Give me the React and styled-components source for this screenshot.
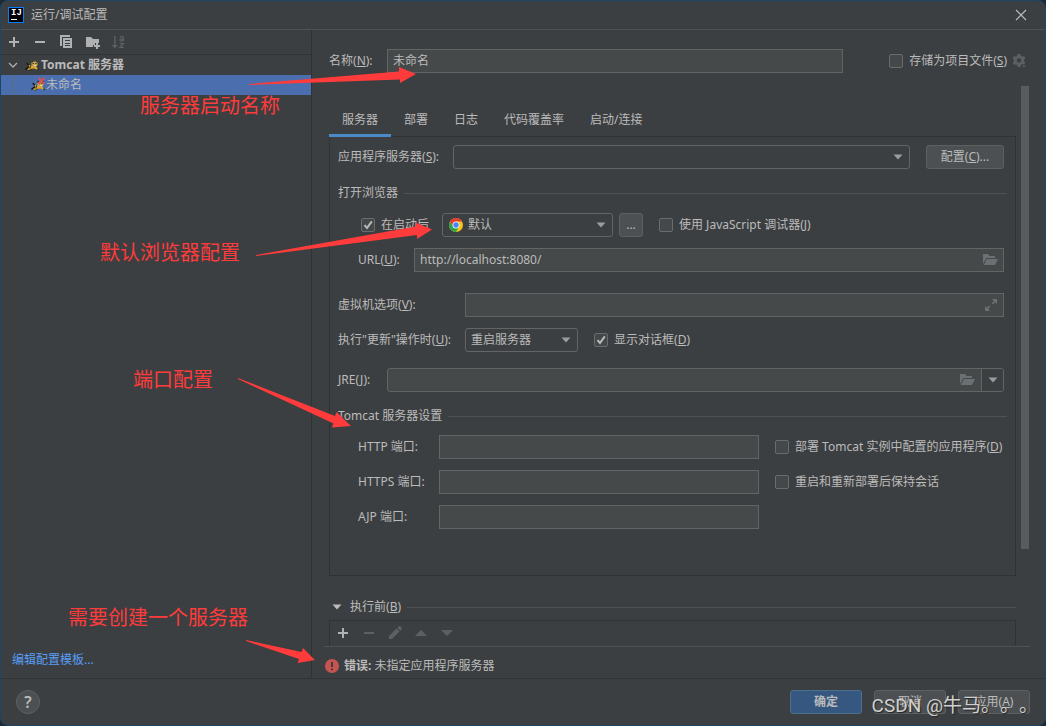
import { useState } from "react";
import styled, { createGlobalStyle } from "styled-components";

const GlobalStyle = createGlobalStyle`
  * {
    box-sizing: border-box;
  }
  body {
    margin: 0;
    background-color: #1d2a36;
    color: #bbbbbb;
    font-family: "Noto Sans", "Noto Sans CJK SC", sans-serif;
    font-size: 12px;
    line-height: 16px;
  }
  button,
  input,
  select {
    font: inherit;
    color: inherit;
  }
`;

// "名称(N):" -> underlined mnemonic letter
const Mnemonic = ({ text, letter, end = "" }) => (
  <span>
    {text}(<u>{letter}</u>){end}
  </span>
);

const TriangleIcon = () => (
  <svg width="10" height="6" viewBox="0 0 10 6">
    <path d="M0.5 0.5H9.5L5 5.5Z" fill="currentColor" />
  </svg>
);

const PlusIcon = () => (
  <svg width="16" height="16" viewBox="0 0 16 16" fill="currentColor">
    <path d="M7 3H9V7H13V9H9V13H7V9H3V7H7Z" />
  </svg>
);

const MinusIcon = () => (
  <svg width="16" height="16" viewBox="0 0 16 16" fill="currentColor">
    <path d="M3 7H13V9H3Z" />
  </svg>
);

const CopyIcon = () => (
  <svg width="16" height="16" viewBox="0 0 16 16" fill="currentColor">
    <path d="M2 1H12V3H4V12H2Z" />
    <path fillRule="evenodd" d="M5 4H14V14H5ZM7 6V7H12V6ZM7 9V10H12V9ZM7 11V12H12V11Z" />
  </svg>
);

const FolderAddIcon = () => (
  <svg width="16" height="16" viewBox="0 0 16 16" fill="currentColor">
    <path d="M2 3H7L9 5H15V9H11V11H9V13H2Z" />
    <path d="M12 9H14V11H16V13H14V15H12V13H10V11H12Z" />
  </svg>
);

const SortIcon = () => (
  <svg width="16" height="16" viewBox="0 0 16 16" fill="currentColor">
    <path d="M4 2H5.5V11H8L4.8 14.2L1.5 11H4Z" />
    <path
      d="M10 3.2C11 2.2 13.5 2.2 13.5 4V7M13.5 5C11 4.6 9.7 5.2 9.8 6.2C10 7.5 13 7.3 13.5 5.5M10 9.7H13.3L10 13.3H13.7"
      fill="none"
      stroke="currentColor"
      strokeWidth="1.3"
    />
  </svg>
);

const PencilIcon = () => (
  <svg width="16" height="16" viewBox="0 0 16 16" fill="currentColor">
    <path d="M2 11L9.5 3.5L12.5 6.5L5 14H2Z" />
    <path d="M10.3 2.7L11.7 1.4C12.2 0.9 12.8 0.9 13.3 1.4L14.6 2.7C15.1 3.2 15.1 3.8 14.6 4.3L13.3 5.7Z" />
  </svg>
);

const FolderIcon = () => (
  <svg width="16" height="16" viewBox="0 0 16 16" fill="currentColor">
    <path d="M1 2H6L7.5 4H13V6H4.5L1 12Z" />
    <path d="M5 7H16L13 13H1.7Z" />
  </svg>
);

const ExpandIcon = () => (
  <svg width="14" height="14" viewBox="0 0 14 14" fill="currentColor">
    <path d="M8 1H13V6L11.2 4.2L8.8 6.6L7.6 5.4L9.9 3Z" />
    <path d="M1 8L2.8 9.8L5.2 7.4L6.4 8.6L4.1 11L6 13H1Z" />
  </svg>
);

const GearIcon = () => (
  <svg width="16" height="16" viewBox="0 0 16 16">
    <g fill="currentColor">
      <path
        fillRule="evenodd"
        d="M5.6 1H8.4L8.8 2.9L10.2 3.7L12 3L13.4 5.4L12 6.7V8.3L13.4 9.6L12 12L10.2 11.3L8.8 12.1L8.4 14H5.6L5.2 12.1L3.8 11.3L2 12L0.6 9.6L2 8.3V6.7L0.6 5.4L2 3L3.8 3.7L5.2 2.9ZM7 5.2A2.3 2.3 0 1 0 7 9.8A2.3 2.3 0 1 0 7 5.2Z"
      />
      <path d="M9 12H15L12 15Z" stroke="#3c3f41" strokeWidth="1" />
    </g>
  </svg>
);

const ChromeIcon = () => (
  <svg width="14" height="14" viewBox="0 0 16 16">
    <circle cx="8" cy="8" r="8" fill="#fbc116" />
    <path d="M8 4H14.93A8 8 0 0 0 1.07 4L4.5 10Z" fill="#e33b2e" />
    <path d="M1.07 4A8 8 0 0 0 8 16L11.4 10L8 8L4.5 10Z" fill="#2ba24c" />
    <circle cx="8" cy="8" r="4" fill="#ffffff" />
    <circle cx="8" cy="8" r="3.1" fill="#4285f4" />
  </svg>
);

const TomcatIcon = ({ broken }) => (
  <svg width="16" height="16" viewBox="0 0 16 16">
    <path
      d="M5 8.5C4 7.5 3.6 6.4 2.6 6.2M5 9.5L1.4 12.6M8 11L4.6 13M12 10.6L14.4 13"
      fill="none"
      stroke="#191813"
      strokeWidth="1.5"
    />
    <path d="M4.4 8L8 8.4L12.6 9.4L14 12.4H12L10.6 11.4L7.6 11.8L5.6 12.8L3 12.8L5.4 10.6Z" fill="#dba72c" />
    <path d="M7.4 3.6L9.2 4.6H11.4L13.6 3.6V8L11.6 9.8L9 9.2L7.4 7.4Z" fill="#c8a452" />
    <path d="M7.2 3.2L9.4 4.6L7.6 6.2ZM13.8 3.2L11.8 4.6L13.6 6Z" fill="#2b2415" />
    <path d="M8.6 6H9.8V7H8.6ZM11.4 6H12.6V7H11.4ZM6 8.4L7 8.6L6.4 11.4L5.4 11.6Z" fill="#23251d" />
    <path d="M10 8L12.4 8L11.4 9.4Z" fill="#f2e6c4" />
    {broken && (
      <path d="M8.5 1L14.5 7M14.5 1L8.5 7" stroke="#d8505c" strokeWidth="1.8" />
    )}
  </svg>
);

const IdeaIcon = () => (
  <Logo>
    IJ
    <i />
  </Logo>
);

const ErrorIcon = () => (
  <svg width="14" height="14" viewBox="0 0 14 14">
    <circle cx="7" cy="7" r="7" fill="#c75450" />
    <path d="M6 3H8V8H6ZM6 9.4H8V11.2H6Z" fill="#3c3f41" />
  </svg>
);

const Check = ({ id, defaultChecked, children }) => (
  <CheckLabel htmlFor={id}>
    <CheckBox type="checkbox" id={id} defaultChecked={defaultChecked} />
    <svg width="14" height="14" viewBox="0 0 14 14">
      <path d="M3.5 7.2L6 10L10.8 3.4" fill="none" stroke="#bbbbbb" strokeWidth="2" />
    </svg>
    {children}
  </CheckLabel>
);

const Dropdown = ({ id, label, options, icon, width }) => (
  <SelectBox $width={width}>
    {icon}
    <select id={id} aria-label={label}>
      {options.map((option) => (
        <option key={option}>{option}</option>
      ))}
    </select>
    <TriangleIcon />
  </SelectBox>
);

const tabs = ["服务器", "部署", "日志", "代码覆盖率", "启动/连接"];

const notes = [
  { text: "服务器启动名称", x: 140, y: 94 },
  { text: "默认浏览器配置", x: 100, y: 241 },
  { text: "端口配置", x: 133, y: 368 },
  { text: "需要创建一个服务器", x: 68, y: 606 },
];

const arrows = [
  "249,84 399,71.5 399,67 416,74 400,83 400,79.5 249,85",
  "256,255 415.5,226.5 415.5,222.5 432,229.5 417,239 417,235 256,256",
  "238,378 335,416 336.5,412 351,426 332,427.5 333.5,423.5 238,379",
  "246,640 301.5,652 303,648 315,660 297.5,663 299,659 246,641",
];

const App = () => {
  const [active, setActive] = useState(tabs[0]);

  return (
    <Window>
      <GlobalStyle />
      <TitleBar>
        <IdeaIcon />
        <Title>运行/调试配置</Title>
        <CloseButton aria-label="关闭">
          <svg width="12" height="12" viewBox="0 0 12 12">
            <path d="M1 1L11 11M11 1L1 11" stroke="#bbbbbb" strokeWidth="1.1" />
          </svg>
        </CloseButton>
      </TitleBar>

      <Body>
        <Sidebar>
          <Toolbar>
            <IconButton aria-label="添加"><PlusIcon /></IconButton>
            <IconButton aria-label="移除"><MinusIcon /></IconButton>
            <IconButton aria-label="复制"><CopyIcon /></IconButton>
            <IconButton aria-label="新建文件夹"><FolderAddIcon /></IconButton>
            <IconButton aria-label="排序" disabled><SortIcon /></IconButton>
          </Toolbar>
          <TreeGroup>
            <svg width="10" height="10" viewBox="0 0 10 10">
              <path d="M1 3L5 7L9 3" fill="none" stroke="#adadad" strokeWidth="1.3" />
            </svg>
            <TomcatIcon />
            Tomcat 服务器
          </TreeGroup>
          <TreeItem>
            <TomcatIcon broken />
            未命名
          </TreeItem>
          <TemplateLink href="#templates">编辑配置模板...</TemplateLink>
        </Sidebar>

        <Main>
          <NameRow>
            <Label htmlFor="name" $width={58}>
              <Mnemonic text="名称" letter="N" end=":" />
            </Label>
            <TextBox>
              <input id="name" defaultValue="未命名" />
            </TextBox>
            <StoreOption>
              <Check id="store">
                <Mnemonic text="存储为项目文件" letter="S" />
              </Check>
              <IconButton aria-label="设置" disabled><GearIcon /></IconButton>
            </StoreOption>
          </NameRow>

          <ScrollArea>
            <Content>
              <Tabs role="tablist">
                {tabs.map((tab) => (
                  <Tab
                    key={tab}
                    role="tab"
                    aria-selected={tab === active}
                    $active={tab === active}
                    onClick={() => setActive(tab)}
                  >
                    {tab}
                  </Tab>
                ))}
              </Tabs>

              <Panel>
                <Row>
                  <Label htmlFor="server" $width={115}>
                    <Mnemonic text="应用程序服务器" letter="S" end=":" />
                  </Label>
                  <Dropdown id="server" options={[""]} />
                  <Button $wide>
                    <Mnemonic text="配置" letter="C" end="..." />
                  </Button>
                </Row>

                <SectionTitle>打开浏览器</SectionTitle>
                <Row $indent={23} $top={12}>
                  <Check id="launch" defaultChecked>
                    <LaunchText>在启动后</LaunchText>
                  </Check>
                  <Dropdown label="浏览器" options={["默认"]} icon={<ChromeIcon />} width={171} />
                  <MoreButton>...</MoreButton>
                  <Check id="js">
                    <Mnemonic text="使用 JavaScript 调试器" letter="J" />
                  </Check>
                </Row>
                <Row $indent={20} $top={11}>
                  <Label htmlFor="url" $width={56}>
                    <Mnemonic text="URL" letter="U" end=":" />
                  </Label>
                  <TextBox>
                    <input id="url" defaultValue="http://localhost:8080/" />
                    <FolderIcon />
                  </TextBox>
                </Row>

                <Row $top={21}>
                  <Label htmlFor="vm" $width={127}>
                    <Mnemonic text="虚拟机选项" letter="V" end=":" />
                  </Label>
                  <TextBox>
                    <input id="vm" />
                    <ExpandIcon />
                  </TextBox>
                </Row>
                <Row $top={11}>
                  <Label htmlFor="update" $width={127}>
                    <Mnemonic text={'执行"更新"操作时'} letter="U" end=":" />
                  </Label>
                  <Dropdown id="update" options={["重启服务器"]} width={113} />
                  <Gap />
                  <Check id="dialog" defaultChecked>
                    <Mnemonic text="显示对话框" letter="D" />
                  </Check>
                </Row>
                <Row $top={16}>
                  <Label htmlFor="jre" $width={49}>
                    <Mnemonic text="JRE" letter="J" end=":" />
                  </Label>
                  <TextBox $combo>
                    <input id="jre" />
                    <FolderIcon />
                    <ComboButton aria-label="选择 JRE"><TriangleIcon /></ComboButton>
                  </TextBox>
                </Row>

                <SectionTitle>Tomcat 服务器设置</SectionTitle>
                <Ports>
                  <label htmlFor="http">HTTP 端口:</label>
                  <TextBox><input id="http" /></TextBox>
                  <Check id="deploy">
                    <Mnemonic text="部署 Tomcat 实例中配置的应用程序" letter="D" />
                  </Check>
                  <label htmlFor="https">HTTPS 端口:</label>
                  <TextBox><input id="https" /></TextBox>
                  <Check id="sessions">重启和重新部署后保持会话</Check>
                  <label htmlFor="ajp">AJP 端口:</label>
                  <TextBox><input id="ajp" /></TextBox>
                </Ports>
              </Panel>

              <BeforeLaunch>
                <TriangleIcon />
                <Mnemonic text="执行前" letter="B" />
              </BeforeLaunch>
              <TaskBar>
                <IconButton aria-label="添加任务"><PlusIcon /></IconButton>
                <IconButton aria-label="移除任务" disabled><MinusIcon /></IconButton>
                <IconButton aria-label="编辑任务" disabled><PencilIcon /></IconButton>
                <IconButton aria-label="上移" disabled>
                  <svg width="16" height="16" viewBox="0 0 16 16" fill="currentColor">
                    <path d="M2 11L8 5L14 11Z" />
                  </svg>
                </IconButton>
                <IconButton aria-label="下移" disabled>
                  <svg width="16" height="16" viewBox="0 0 16 16" fill="currentColor">
                    <path d="M2 5L8 11L14 5Z" />
                  </svg>
                </IconButton>
              </TaskBar>
            </Content>
            <ScrollThumb />
          </ScrollArea>

          <ErrorRow>
            <ErrorIcon />
            <span>
              <b>错误:</b> 未指定应用程序服务器
            </span>
          </ErrorRow>
        </Main>
      </Body>

      <Footer>
        <HelpButton aria-label="帮助">?</HelpButton>
        <Button $primary>确定</Button>
        <Button>取消</Button>
        <Button>
          <Mnemonic text="应用" letter="A" />
        </Button>
        <Watermark>CSDN @牛马。。。</Watermark>
      </Footer>

      <Arrows width="1046" height="726" viewBox="0 0 1046 726">
        {arrows.map((points) => (
          <polygon key={points} points={points} fill="#ff3b3b" />
        ))}
      </Arrows>
      {notes.map((note) => (
        <Note key={note.text} $x={note.x} $y={note.y}>
          {note.text}
        </Note>
      ))}
    </Window>
  );
};

const Window = styled.div`
  position: relative;
  display: flex;
  flex-direction: column;
  min-height: 100vh;
  background-color: #3c3f41;
  border: 1px solid #1e4466;
  border-radius: 8px;
  overflow: hidden;
`;

const TitleBar = styled.header`
  display: flex;
  align-items: center;
  height: 29px;
  padding: 0 18px 0 7px;
  border-bottom: 1px solid #515151;
`;

const Logo = styled.span`
  display: flex;
  flex-direction: column;
  width: 16px;
  height: 16px;
  padding: 1px 2px;
  background-color: #000000;
  border: 1px solid #087cfa;
  color: #ffffff;
  font: bold 9px/9px "Liberation Mono", monospace;
  i {
    width: 6px;
    height: 1px;
    margin-top: 1px;
    background-color: #ffffff;
  }
`;

const Title = styled.span`
  flex: 1;
  margin-left: 7px;
`;

const CloseButton = styled.button`
  display: flex;
  padding: 0;
  border: none;
  background: none;
`;

const Body = styled.div`
  flex: 1;
  display: flex;
`;

const Sidebar = styled.aside`
  display: flex;
  flex-direction: column;
  width: 311px;
  border-right: 1px solid #323232;
`;

const Toolbar = styled.div`
  display: flex;
  align-items: center;
  gap: 10px;
  height: 25px;
  padding-left: 5px;
  border-bottom: 1px solid #323232;
`;

const IconButton = styled.button`
  display: flex;
  padding: 0;
  border: none;
  background: none;
  color: ${(props) => (props.disabled ? "#5d6062" : "#afb1b3")};
`;

const TreeGroup = styled.div`
  display: flex;
  align-items: center;
  height: 20px;
  padding-left: 7px;
  font-weight: bold;
  svg + svg {
    margin: 0 1px 0 6px;
  }
`;

const TreeItem = styled.div`
  display: flex;
  align-items: center;
  height: 20px;
  padding-left: 29px;
  background: linear-gradient(#5f6a7c, #5f6a7c) 11px 0 / 1px 100% no-repeat #4b6eaf;
`;

const TemplateLink = styled.a`
  margin: auto 0 10px 11px;
  color: #589df6;
  text-decoration: none;
`;

const Main = styled.main`
  flex: 1;
  display: flex;
  flex-direction: column;
  min-width: 0;
  padding: 0 15px 0 12px;
`;

const NameRow = styled.div`
  display: flex;
  align-items: center;
  padding: 19px 0 13px 5px;
`;

const Label = styled.label`
  flex: none;
  width: ${(props) => props.$width}px;
`;

const TextBox = styled.div`
  flex: 1;
  display: flex;
  align-items: center;
  height: 24px;
  padding-right: ${(props) => (props.$combo ? 0 : 5)}px;
  background-color: #45494a;
  border: 1px solid #646464;
  border-radius: ${(props) => (props.$combo ? 3 : 0)}px;
  color: #6b7073;
  input {
    flex: 1;
    width: 100%;
    min-width: 0;
    padding: 0 5px;
    border: none;
    outline: none;
    background: none;
    color: #bbbbbb;
  }
`;

const StoreOption = styled.div`
  display: flex;
  align-items: center;
  gap: 5px;
  margin-left: 46px;
  margin-right: 2px;
`;

const CheckLabel = styled.label`
  position: relative;
  display: flex;
  align-items: center;
  gap: 6px;
  svg {
    position: absolute;
    left: 0;
    visibility: hidden;
  }
  input:checked + svg {
    visibility: visible;
  }
`;

const CheckBox = styled.input`
  appearance: none;
  width: 14px;
  height: 14px;
  margin: 0;
  background-color: #43494a;
  border: 1px solid #6b6b6b;
  border-radius: 2px;
`;

const ScrollArea = styled.div`
  display: flex;
  gap: 5px;
  border-bottom: 1px solid #515151;
`;

const Content = styled.div`
  flex: 1;
  min-width: 0;
  padding: 17px 0 0 5px;
`;

const ScrollThumb = styled.div`
  width: 8px;
  height: 463px;
  margin-right: 1px;
  background-color: #5a5b5c;
`;

const Tabs = styled.div`
  display: flex;
`;

const Tab = styled.button`
  height: 34px;
  padding: 2px 13px 0;
  border: none;
  border-bottom: 3px solid ${(props) => (props.$active ? "#4a88c7" : "transparent")};
  background: none;
`;

const Panel = styled.section`
  margin-top: -1px;
  padding: 8px 8px 46px;
  border: 1px solid #323232;
`;

const Row = styled.div`
  display: flex;
  align-items: center;
  margin-top: ${(props) => props.$top || 0}px;
  margin-right: 3px;
  padding-left: ${(props) => props.$indent || 0}px;
`;

const SelectBox = styled.div`
  flex: ${(props) => (props.$width ? `0 0 ${props.$width}px` : 1)};
  display: flex;
  align-items: center;
  height: 24px;
  padding: 0 6px;
  border: 1px solid #646464;
  border-radius: 3px;
  color: #9a9da0;
  select {
    flex: 1;
    min-width: 0;
    margin-left: -1px;
    padding: 0;
    appearance: none;
    border: none;
    outline: none;
    background: none;
    color: #bbbbbb;
  }
  svg + select {
    margin-left: 5px;
  }
`;

const Button = styled.button`
  min-width: ${(props) => (props.$wide ? 78 : 72)}px;
  height: 24px;
  margin-left: ${(props) => (props.$wide ? 16 : 0)}px;
  padding: 0 6px;
  background-color: ${(props) => (props.$primary ? "#365880" : "#4c5052")};
  border: 1px solid ${(props) => (props.$primary ? "#4c708c" : "#5e6060")};
  border-radius: 3px;
  font-weight: ${(props) => (props.$primary ? "bold" : "normal")};
`;

const MoreButton = styled.button`
  width: 24px;
  height: 24px;
  margin: 0 16px 0 6px;
  padding: 0;
  background-color: #4c5052;
  border: 1px solid #5e6060;
  border-radius: 3px;
`;

const LaunchText = styled.span`
  width: 61px;
`;

const Gap = styled.span`
  width: 16px;
`;

const SectionTitle = styled.h2`
  display: flex;
  align-items: center;
  gap: 6px;
  margin: 16px 0 0;
  font-size: 12px;
  font-weight: normal;
  &::after {
    content: "";
    flex: 1;
    height: 1px;
    background-color: #515151;
  }
`;

const ComboButton = styled.button`
  display: flex;
  align-items: center;
  justify-content: center;
  align-self: stretch;
  width: 22px;
  margin-left: 6px;
  padding: 0;
  border: none;
  border-left: 1px solid #646464;
  border-radius: 0 2px 2px 0;
  background-color: #3c3f41;
  color: #9a9da0;
`;

const Ports = styled.div`
  display: grid;
  grid-template-columns: 81px minmax(0, 1fr) 248px;
  align-items: center;
  row-gap: 11px;
  margin-top: 11px;
  padding-left: 20px;
  ${CheckLabel} {
    margin-left: 16px;
  }
`;

const BeforeLaunch = styled(SectionTitle)`
  margin-top: 23px;
  padding-left: 3px;
  span {
    margin-left: 2px;
  }
`;

const TaskBar = styled.div`
  display: flex;
  align-items: center;
  gap: 10px;
  height: 26px;
  margin-top: 5px;
  padding: 0 0 2px 5px;
  border: 1px solid #323232;
  border-bottom: none;
`;

const ErrorRow = styled.div`
  display: flex;
  align-items: center;
  gap: 5px;
  padding: 11px 0 4px 1px;
`;

const Footer = styled.footer`
  position: relative;
  display: flex;
  align-items: center;
  gap: 12px;
  height: 47px;
  padding: 0 15px;
  border-top: 1px solid #323232;
`;

const HelpButton = styled.button`
  width: 24px;
  height: 24px;
  margin-right: auto;
  padding: 0;
  background-color: #4c5052;
  border: 1px solid #5e6060;
  border-radius: 50%;
  font-size: 16px;
  font-weight: 600;
`;

const Watermark = styled.span`
  position: absolute;
  right: 7px;
  bottom: 5px;
  color: #d0d0d0;
  font: 19px/28px "Roboto", "Noto Sans CJK SC", sans-serif;
  text-spacing-trim: space-all;
  text-shadow: 1px 1px 1px #222222;
  white-space: nowrap;
  pointer-events: none;
`;

const Arrows = styled.svg`
  position: absolute;
  left: -1px;
  top: -1px;
  pointer-events: none;
`;

const Note = styled.span`
  position: absolute;
  left: ${(props) => props.$x - 1}px;
  top: ${(props) => props.$y - 1}px;
  color: #ff3b3b;
  font-size: 20px;
  line-height: 24px;
  white-space: nowrap;
  pointer-events: none;
`;

export default App;
